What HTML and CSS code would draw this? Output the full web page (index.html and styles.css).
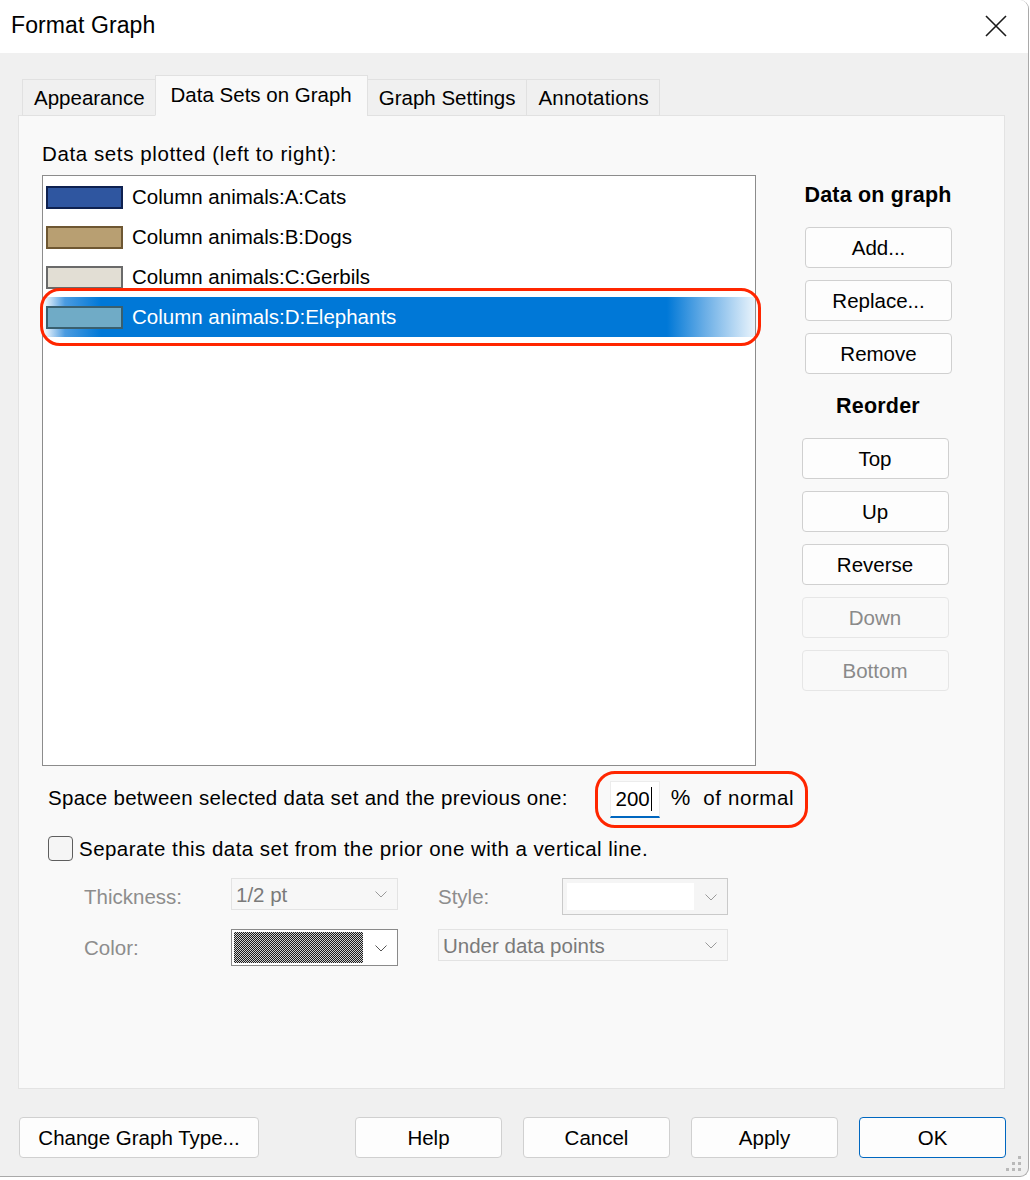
FILE: index.html
```html
<!DOCTYPE html>
<html>
<head>
<meta charset="utf-8">
<title>Format Graph</title>
<link rel="stylesheet" href="styles.css">
</head>
<body>
<div class="window">
  <div class="titlebar">
    <span class="title">Format Graph</span>
    <svg class="close" width="22" height="22" viewBox="0 0 22 22"><path d="M1 1 L21 21 M21 1 L1 21" stroke="#1a1a1a" stroke-width="1.6" fill="none"/></svg>
  </div>
  <div class="client">
    <div class="tabs">
      <div class="tab">Appearance</div>
      <div class="tab active">Data Sets on Graph</div>
      <div class="tab">Graph Settings</div>
      <div class="tab last">Annotations</div>
    </div>
    <div class="panel">
      <div class="list-label">Data sets plotted (left to right):</div>
      <div class="main">
        <div class="listbox">
          <div class="row"><span class="swatch sw-cats"></span><span>Column animals:A:Cats</span></div>
          <div class="row"><span class="swatch sw-dogs"></span><span>Column animals:B:Dogs</span></div>
          <div class="row"><span class="swatch sw-gerbils"></span><span>Column animals:C:Gerbils</span></div>
          <div class="row selected"><span class="swatch sw-eleph"></span><span>Column animals:D:Elephants</span><span class="mark-row"></span></div>
        </div>
        <div class="side">
          <div class="side-head">Data on graph</div>
          <div class="btn side-btn g1">Add...</div>
          <div class="btn side-btn g1">Replace...</div>
          <div class="btn side-btn g1">Remove</div>
          <div class="side-head reorder">Reorder</div>
          <div class="btn side-btn g2">Top</div>
          <div class="btn side-btn g2">Up</div>
          <div class="btn side-btn g2">Reverse</div>
          <div class="btn side-btn g2 disabled">Down</div>
          <div class="btn side-btn g2 disabled">Bottom</div>
        </div>
      </div>
      <div class="space-row">
        <span class="space-text">Space between selected data set and the previous one:</span>
        <div class="mark-box">
          <div class="numbox">200<span class="caret"></span></div>
          <span class="pct">%</span>
          <span class="normal">of normal</span>
        </div>
      </div>
      <div class="check-row">
        <span class="checkbox"></span>
        <span class="check-text">Separate this data set from the prior one with a vertical line.</span>
      </div>
      <div class="opt-row">
        <span class="opt-label w1">Thickness:</span>
        <div class="select sel-thick"><span class="sel-text">1/2 pt</span><svg class="chev" width="12" height="7" viewBox="0 0 12 7"><path d="M0.5 0.5 L6 6 L11.5 0.5" stroke="#9a9a9a" stroke-width="1" fill="none"/></svg></div>
        <span class="opt-label w2">Style:</span>
        <div class="select sel-style"><span class="sel-white"></span><svg class="chev" width="12" height="7" viewBox="0 0 12 7"><path d="M0.5 0.5 L6 6 L11.5 0.5" stroke="#9a9a9a" stroke-width="1" fill="none"/></svg></div>
      </div>
      <div class="opt-row second">
        <span class="opt-label w1">Color:</span>
        <div class="select sel-color"><span class="checker"></span><svg class="chev" width="12" height="7" viewBox="0 0 12 7"><path d="M0.5 0.5 L6 6 L11.5 0.5" stroke="#555" stroke-width="1" fill="none"/></svg></div>
        <div class="select sel-under"><span class="sel-text">Under data points</span><svg class="chev" width="12" height="7" viewBox="0 0 12 7"><path d="M0.5 0.5 L6 6 L11.5 0.5" stroke="#9a9a9a" stroke-width="1" fill="none"/></svg></div>
      </div>
    </div>
    <div class="bottom">
      <div class="btn bb wide">Change Graph Type...</div>
      <div class="bb-right">
        <div class="btn bb">Help</div>
        <div class="btn bb">Cancel</div>
        <div class="btn bb">Apply</div>
        <div class="btn bb ok">OK</div>
      </div>
    </div>
    <svg class="grip" width="18" height="18" viewBox="0 0 18 18">
      <rect x="12" y="0" width="3" height="3" fill="#b9b9b9"/>
      <rect x="6" y="6" width="3" height="3" fill="#b9b9b9"/>
      <rect x="12" y="6" width="3" height="3" fill="#b9b9b9"/>
      <rect x="0" y="12" width="3" height="3" fill="#b9b9b9"/>
      <rect x="6" y="12" width="3" height="3" fill="#b9b9b9"/>
      <rect x="12" y="12" width="3" height="3" fill="#b9b9b9"/>
    </svg>
  </div>
</div>
</body>
</html>
```
FILE: styles.css
```css
* { box-sizing: border-box; }
html, body { margin: 0; padding: 0; background: #ffffff; }
body {
  font-family: "Liberation Sans", Arial, sans-serif;
  font-size: 20.5px;
  color: #000;
  width: 1030px;
  height: 1180px;
  overflow: hidden;
}
.window {
  width: 1029px;
  height: 1177px;
  border-right: 1px solid #a9a9a9;
  border-bottom: 1px solid #a9a9a9;
  border-top-right-radius: 9px;
  border-bottom-right-radius: 9px;
  overflow: hidden;
  display: flex;
  flex-direction: column;
  background: #f0f0f0;
}
.titlebar {
  height: 53px;
  flex: none;
  background: #ffffff;
  display: flex;
  align-items: center;
  justify-content: space-between;
  padding: 0 21px 2px 11px;
}
.title { font-size: 23px; letter-spacing: 0.1px; }
.close { display: block; margin-top: 1px; }
.client {
  flex: 1;
  position: relative;
  padding: 22px 0 0 18px;
}
.tabs {
  display: flex;
  align-items: flex-end;
  margin-left: 4px;
  position: relative;
  z-index: 2;
  margin-bottom: -1px;
}
.tab {
  height: 37px;
  padding: 0 10px 0 11px;
  display: flex;
  align-items: center;
  background: #f0f0f0;
  border: 1px solid #e1e1e1;
  border-bottom: 1px solid #e1e1e1;
  margin-right: -1px;
}
.tab.active {
  height: 41px;
  padding: 0 15px 2px 15px;
  background: #f9f9f9;
  border-bottom-color: #f9f9f9;
}
.tab.last { padding: 0 10px 0 12px; letter-spacing: 0.2px; }
.panel {
  width: 987px;
  height: 974px;
  background: #f9f9f9;
  border: 1px solid #e3e3e3;
  padding: 0 0 0 23px;
}
.list-label {
  margin-top: 26px;
  line-height: 24px;
  height: 24px;
  letter-spacing: 0.6px;
}
.main {
  display: flex;
  margin-top: 9px;
}
.listbox {
  width: 714px;
  height: 591px;
  background: #ffffff;
  border: 1px solid #8c8c8c;
  padding-top: 1px;
}
.row {
  height: 40px;
  display: flex;
  align-items: center;
  padding-left: 3px;
  position: relative;
}
.row.selected {
  color: #ffffff;
  background: linear-gradient(to right, #ffffff 0px, #4a9be0 22px, #0078d7 58px, #0078d7 calc(100% - 88px), #6aaee6 calc(100% - 50px), #eaf4fc 100%);
}
.swatch {
  width: 77px;
  height: 23px;
  border: 2px solid #000;
  margin-right: 9px;
  flex: none;
}
.sw-cats { background: #2f56a0; border-color: #0e2150; }
.sw-dogs { background: #b89f72; border-color: #6e5732; }
.sw-gerbils { background: #e2ded4; border-color: #6a6a6a; }
.sw-eleph { background: #70abc6; border-color: #395f6e; }
.mark-row {
  position: absolute;
  left: -3px;
  right: -6px;
  top: -9px;
  bottom: -9px;
  border: 3px solid #ff2600;
  border-radius: 20px;
  pointer-events: none;
}
.side {
  width: 244px;
  display: flex;
  flex-direction: column;
  align-items: center;
  padding-top: 8px;
}
.side-head {
  font-weight: bold;
  font-size: 21.5px;
  line-height: 24px;
  height: 24px;
  margin-bottom: 20px;
  letter-spacing: 0.2px;
}
.side-head.reorder { margin-top: 8px; }
.btn {
  background: #fdfdfd;
  border: 1px solid #d0d0d0;
  border-radius: 4px;
  display: flex;
  align-items: center;
  justify-content: center;
}
.side-btn {
  width: 147px;
  height: 41px;
  margin-bottom: 12px;
}
.g1 { margin-left: 1px; }
.g2 { margin-right: 6px; }
.btn.disabled {
  background: #f9f9f9;
  border-color: #e6e6e6;
  color: #8a8a8a;
}
.space-row {
  display: flex;
  align-items: center;
  margin-top: 5px;
  padding-left: 6px;
}
.space-text { letter-spacing: 0.28px; margin-bottom: 4px; }
.mark-box {
  display: flex;
  align-items: center;
  height: 57px;
  margin-left: 27px;
  border: 3px solid #ff2600;
  border-radius: 20px;
  padding: 0 11px 0 12px;
}
.mark-box > span { margin-bottom: 4px; }
.numbox {
  width: 50px;
  height: 37px;
  background: #ffffff;
  border: 1px solid #ececec;
  border-bottom: 2px solid #0067c0;
  display: flex;
  align-items: center;
  justify-content: flex-end;
  padding-right: 7px;
}
.caret {
  display: inline-block;
  width: 1px;
  height: 24px;
  background: #000;
  margin-left: 1px;
}
.pct { margin: 0 13px 0 11px; font-size: 22px; }
.normal { letter-spacing: 0.6px; }
.check-row {
  display: flex;
  align-items: center;
  margin-top: 8px;
  padding-left: 6px;
}
.check-text { letter-spacing: 0.46px; }
.checkbox {
  width: 25px;
  height: 25px;
  border: 1px solid #5e5e5e;
  border-radius: 4px;
  background: #f5f5f5;
  margin-right: 6px;
  flex: none;
}
.opt-row {
  display: flex;
  align-items: flex-start;
  margin-top: 17px;
  padding-left: 42px;
}
.opt-row.second { margin-top: 13px; }
.opt-label {
  color: #8d8d8d;
  line-height: 38px;
}
.w1 { width: 147px; }
.w2 { width: 124px; }
.select {
  position: relative;
  display: flex;
  align-items: center;
  border: 1px solid #e3e3e3;
  background: #f7f7f7;
  color: #7a7a7a;
}
.sel-text { padding-left: 4px; margin-top: 2px; }
.chev { position: absolute; right: 10px; top: 50%; margin-top: -3px; }
.sel-thick { width: 167px; height: 32px; margin-right: 40px; }
.sel-style { width: 166px; height: 37px; border-color: #cacaca; background: #f5f5f5; }
.sel-white {
  position: absolute;
  left: 4px; top: 4px; bottom: 4px;
  width: 127px;
  background: #ffffff;
}
.sel-color { width: 167px; height: 37px; border-color: #8a8a8a; background: #ffffff; margin-right: 40px; }
.checker {
  position: absolute;
  left: 2px; top: 2px; bottom: 2px;
  width: 129px;
  background: repeating-conic-gradient(#1a1a1a 0% 25%, #cfcfcf 0% 50%) 0 0 / 2px 2px;
}
.sel-under { width: 290px; height: 32px; }
.bottom {
  display: flex;
  margin-top: 28px;
  padding-left: 1px;
}
.bb {
  width: 147px;
  height: 41px;
}
.bb.wide { width: 240px; }
.bb-right {
  display: flex;
  gap: 21px;
  margin-left: 96px;
}
.bb.ok { border-color: #0067c0; }
.grip {
  position: absolute;
  right: 4px;
  bottom: 2px;
}
```
